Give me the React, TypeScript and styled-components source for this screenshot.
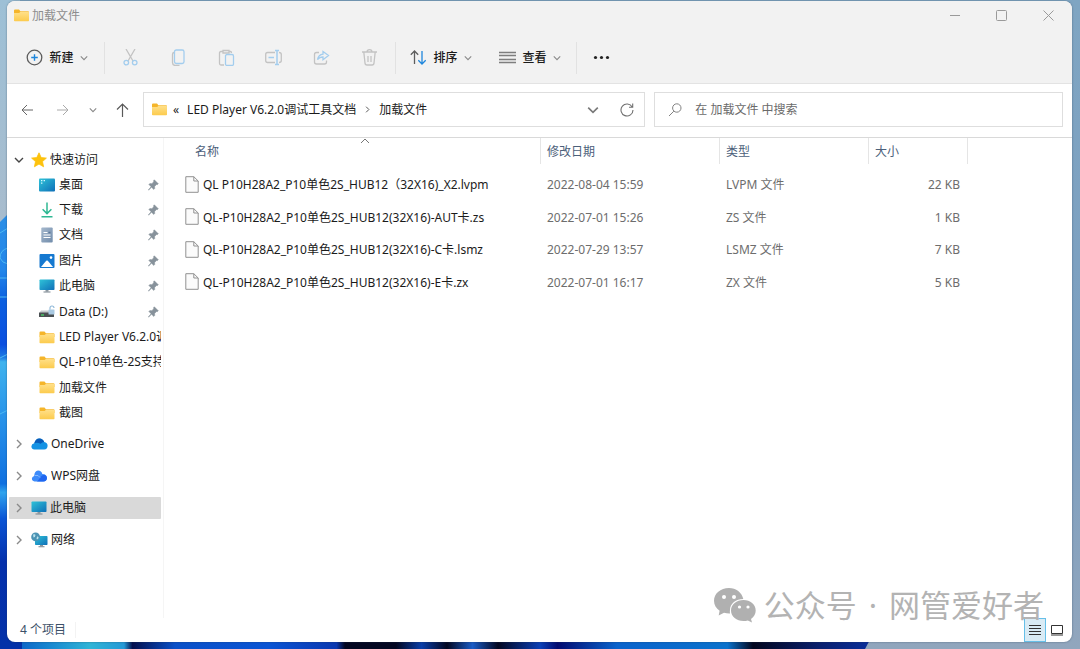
import React from 'react';
import styled, { createGlobalStyle } from 'styled-components';

const GlobalStyle = createGlobalStyle`
  * { box-sizing: border-box; }
  body {
    margin: 0;
    font-family: "Noto Sans", "Noto Sans CJK SC", sans-serif;
    font-size: 12px;
    line-height: 16px;
    color: #1b1b1b;
  }
  button, input { font: inherit; color: inherit; }
`;

const Desktop = styled.main`
  position: relative;
  min-height: 100vh;
  display: flex;
  padding: 1px 8px 7px 7px;
  background: #8fa6bf;
  overflow: hidden;
`;

const WallpaperArt = styled.svg`
  position: absolute;
  inset: 0;
  width: 100%;
  height: 100%;
`;

const Window = styled.section`
  position: relative;
  flex: 1;
  min-width: 0;
  display: flex;
  flex-direction: column;
  background: #fff;
  border-radius: 8px;
  overflow: hidden;
  box-shadow: 0 0 2px rgba(40, 60, 80, 0.6);
`;

const TitleBar = styled.header`
  display: flex;
  align-items: center;
  justify-content: space-between;
  height: 29px;
  padding-left: 7px;
  background: #f2f2f2;
`;

const Title = styled.h1`
  display: flex;
  align-items: center;
  gap: 3px;
  margin: 0;
  font-size: 12px;
  font-weight: 400;
  color: #8d8d8d;
`;

const Captions = styled.div`
  display: flex;
`;

const IconButton = styled.button<{ $w?: number; $h?: number }>`
  display: flex;
  align-items: center;
  justify-content: center;
  flex: none;
  width: ${p => p.$w ?? 24}px;
  height: ${p => p.$h ?? 24}px;
  padding: 0;
  border: 0;
  background: none;
`;

const Toolbar = styled.div`
  display: flex;
  align-items: center;
  height: 54px;
  padding: 2px 0 0 10px;
  border-bottom: 1px solid #e3e3e3;
  background: #f2f2f2;
`;

const ToolGroup = styled.div`
  display: grid;
  grid-template-columns: repeat(6, 1fr);
  justify-items: center;
  width: 286px;
`;

const SortGroup = styled.div`
  display: flex;
  gap: 9px;
`;

const ToolButton = styled.button`
  display: flex;
  align-items: center;
  justify-content: center;
  gap: 6px;
  height: 32px;
  width: 80px;
  padding: 0;
  border: 0;
  background: none;
  font-weight: 500;
`;

const Divider = styled.span<{ $left?: number; $right?: number }>`
  width: 1px;
  height: 32px;
  margin: 0 ${p => p.$right ?? 0}px 0 ${p => p.$left ?? 0}px;
  background: #e2e2e2;
`;

const NavBar = styled.div`
  display: flex;
  align-items: center;
  height: 54px;
  padding: 0 9px 2px 8px;
  border-bottom: 1px solid #d9d9d9;
`;

const NavButtons = styled.nav`
  display: flex;
  align-items: center;
  width: 128px;
`;

const AddressBar = styled.div`
  flex: 1;
  min-width: 0;
  display: flex;
  align-items: center;
  height: 35px;
  padding-left: 8px;
  border: 1px solid #dedede;
`;

const Crumbs = styled.div`
  flex: 1;
  min-width: 0;
  display: flex;
  align-items: center;
  gap: 8px;
  margin-left: 6px;
  white-space: nowrap;
`;

const Crumb = styled.a`
  color: inherit;
  text-decoration: none;
`;

const SearchBox = styled.label`
  width: 39%;
  flex: none;
  display: flex;
  align-items: center;
  gap: 12px;
  height: 35px;
  margin-left: 9px;
  padding: 0 13px;
  border: 1px solid #dedede;
`;

const SearchInput = styled.input`
  flex: 1;
  min-width: 0;
  padding: 0;
  border: 0;
  outline: 0;
  background: none;
  &::placeholder { color: #6a6a6a; opacity: 1; }
`;

const Content = styled.div`
  flex: 1;
  display: flex;
  min-height: 0;
`;

const Sidebar = styled.nav`
  width: 157px;
  flex: none;
  padding: 11px 2px 0;
  border-right: 1px solid #f5f5f5;
`;

const Tree = styled.ul`
  list-style: none;
  margin: 0;
  padding: 0;
`;

const QuickList = styled(Tree)`
  display: grid;
  grid-template-columns: minmax(0, 1fr);
  grid-template-rows: repeat(10, 1fr);
  height: 254px;
  margin: 1px 0 7px;
`;

const RootRow = styled.li<{ $selected?: boolean }>`
  display: flex;
  align-items: center;
  gap: 3px;
  height: 22px;
  padding-left: 5px;
  border-radius: 1px;
  background: ${p => (p.$selected ? '#d9d9d9' : 'none')};
  svg { flex: none; }
  svg:first-child { margin-right: 4px; }
  & + & { margin-top: 10px; }
`;

const QuickRow = styled.li`
  display: flex;
  align-items: center;
  gap: 4px;
  padding-left: 30px;
  svg { flex: none; }
`;

const TreeLink = styled.a`
  flex: 1;
  overflow: hidden;
  white-space: nowrap;
  color: inherit;
  text-decoration: none;
`;

const PinArt = styled.svg`
  margin-right: 2px;
`;

const FilePane = styled.div`
  flex: 1;
  min-width: 0;
`;

const Table = styled.table`
  width: 804px;
  height: 160px;
  table-layout: fixed;
  border-collapse: collapse;
`;

const Col = styled.col<{ $w: number }>`
  width: ${p => p.$w}px;
`;

const Th = styled.th`
  position: relative;
  height: 30px;
  padding: 0 0 2px 6px;
  text-align: left;
  font-weight: 400;
  color: #4c607a;
  background: linear-gradient(#e5e5e5, #e5e5e5) right top / 1px 26px no-repeat;
  &:first-child { padding-left: 31px; }
`;

const SortMark = styled.svg`
  position: absolute;
  top: 0;
  left: 196px;
`;

const Td = styled.td<{ $right?: boolean }>`
  height: 32px;
  padding: 2px 8px 0 6px;
  white-space: nowrap;
  color: #6d6d6d;
  text-align: ${p => (p.$right ? 'right' : 'left')};
`;

const FileName = styled.a`
  display: flex;
  align-items: center;
  gap: 4px;
  padding-left: 15px;
  color: #1b1b1b;
  text-decoration: none;
`;

const FileArt = styled.svg`
  margin-bottom: 2px;
`;

const StatusBar = styled.footer`
  display: flex;
  align-items: center;
  justify-content: space-between;
  height: 24px;
  padding: 0 4px 0 13px;
  color: #3c5068;
`;

const ItemCount = styled.span`
  padding-right: 9px;
  border-right: 1px solid #f3f3f3;
`;

const ViewSwitch = styled.div`
  display: flex;
`;

const ViewButton = styled(IconButton)<{ $on?: boolean }>`
  border: 1px solid ${p => (p.$on ? '#66bfe8' : 'transparent')};
  background: ${p => (p.$on ? '#d9ebf5' : 'none')};
`;

const Watermark = styled.div`
  position: absolute;
  right: 28px;
  bottom: 15px;
  display: flex;
  align-items: center;
  gap: 8px;
  font-size: 31px;
  line-height: 44px;
  color: #b3b3b3;
  white-space: nowrap;
  pointer-events: none;
`;

const WatermarkText = styled.div`
  display: flex;
  gap: 12px;
`;

const Chevron = ({ dir = 'down', size = 8, color = '#8a8a8a' }: { dir?: 'down' | 'right'; size?: number; color?: string }) => (
  <svg width={size} height={size} viewBox="0 0 10 10" fill="none" stroke={color} strokeWidth="1.4">
    <path d={dir === 'down' ? 'M1 3l4 4 4-4' : 'M3 1l4 4-4 4'} />
  </svg>
);

const Folder = ({ w = 15 }: { w?: number }) => (
  <svg width={w} height="13" viewBox="0 0 15 13">
    <path d="M0 1.6Q0 .6 1 .6h4l1.4 1.6H14q1 0 1 1V6H0z" fill="#f5b52a" />
    <path d="M0 4h5.2l1.3-1.2H14q1 0 1 1v7.6q0 .8-.8.8H.8q-.8 0-.8-.8z" fill="url(#folderFace)" />
  </svg>
);

const Monitor = () => (
  <svg width="16" height="14" viewBox="0 0 16 14">
    <rect x=".5" y=".5" width="15" height="10.5" rx=".8" fill="url(#screen)" />
    <path d="M6.5 11h3v1.6h-3z" fill="#8b969e" /><path d="M4.5 12.5h7v1h-7z" fill="#77838c" />
  </svg>
);

const Icons = {
  star: (
    <svg width="16" height="16" viewBox="0 0 16 16"><path d="M8 .8l2.2 4.8 5.2.5-3.9 3.5 1.1 5.2L8 12.1l-4.6 2.7 1.1-5.2L.6 6.1l5.2-.5z" fill="#fdc20d" stroke="#fdc20d" strokeWidth=".8" strokeLinejoin="round" /></svg>
  ),
  desktop: (
    <svg width="16" height="14" viewBox="0 0 16 14"><rect y=".5" width="16" height="13" rx="1" fill="url(#screen)" /><path d="M2 2.7h1.4M2 5.2h1.4M4.6 2.7H6" stroke="#d7f7ff" strokeWidth="1.2" /></svg>
  ),
  download: (
    <svg width="16" height="16" viewBox="0 0 16 16" fill="none" stroke="#2fb893" strokeWidth="1.5"><path d="M8 .5v11M3.6 7.3L8 11.6l4.4-4.3M2.5 14.8h11" /></svg>
  ),
  doc: (
    <svg width="16" height="16" viewBox="0 0 16 16"><rect x="2.3" y=".5" width="11.4" height="15" rx="1" fill="url(#docFace)" /><path d="M4.5 5.5h4M4.5 8h7M4.5 10.5h7" stroke="#fff" strokeWidth="1.2" /><path d="M9.5 5.5h2" stroke="#5e7898" strokeWidth="1.6" /></svg>
  ),
  picture: (
    <svg width="16" height="14" viewBox="0 0 16 14"><rect x=".5" width="15" height="14" rx="1" fill="#1679d0" /><path d="M2 13l5.2-6.2Q8 6 8.8 6.8L14 13z" fill="#fff" /><circle cx="12" cy="3.6" r="1.3" fill="#fff" /></svg>
  ),
  drive: (
    <svg width="16" height="14" viewBox="0 0 16 14"><path d="M2 5.5h9.5L15 8H0z" fill="#c4c9cc" /><rect y="7.5" width="15" height="4.5" rx=".6" fill="#4a4f52" /><path d="M2 10h3" stroke="#49e06a" strokeWidth="1.2" /><rect x="9.5" y="4.5" width="6" height="5" rx=".5" fill="#a9c9e2" /><path d="M11 4.5V3q0-2 2-2t2 2" fill="none" stroke="#8db7d8" strokeWidth="1.1" /></svg>
  ),
  onedrive: (
    <svg width="17" height="12" viewBox="0 0 17 12"><path d="M3.4 11.5Q.3 11.3.4 8.3.6 5.6 3.3 5.2 4.5.7 8.4.6q3.5 0 4.8 3.5 3.3.4 3.4 3.7-.1 3.5-3.4 3.7z" fill="#1593e4" /><path d="M3.3 5.2Q4.5.7 8.4.6q3.5 0 4.8 3.5-2 .1-3.6 1.6Q6.5 4.2 3.3 5.2z" fill="#0a5cb8" /></svg>
  ),
  wps: (
    <svg width="17" height="12" viewBox="0 0 17 12"><path d="M3.5 11.5Q.9 11.2.9 8.6q.1-2 2.3-2.6Q3.6.8 7 .6q3.6.1 4.3 3.5 4.3.3 4.7 3.7-.1 3.5-3.7 3.7z" fill="#3d8bfa" /><path d="M5.5 11.5q1.5-.5 3-3 2-3.500 5-3.700 2.500.8 2.500 3.200-.2 3.300-3.700 3.500z" fill="#1f66f0" /><path d="M4 5.500q3.500-1 5 2" fill="none" stroke="#9cc6ff" strokeWidth=".8" /></svg>
  ),
  network: (
    <svg width="17" height="16" viewBox="0 0 17 16"><rect x="4" y="4" width="12.500" height="9" rx=".7" fill="url(#screen)" /><path d="M9 13h3v1.300H9z" fill="#8b969e" /><path d="M7.500 14.300h6v1h-6z" fill="#77838c" /><circle cx="4.600" cy="4.900" r="4.400" fill="#4b93b4" /><path d="M2 2.500q2.600-1 2.400 1T2.500 5.500zM6 4.500q2-.4 1.500 1.500T5.500 7z" fill="#b9e2ec" /></svg>
  ),
};

const Pin = () => (
  <PinArt width="11" height="12" viewBox="0 0 11 12"><path d="M6.300.8l4 4-1 .9-.8-.2-1.900 2 .1 2-.9.900L3.500 8.200.6 11.200l-.3-.3L3.100 7.800.9 5.500l.9-.9 2.100.1L5.700 2.700l-.2-.9z" fill="#87929b" stroke="#87929b" strokeWidth=".5" /></PinArt>
);

const FileIcon = () => (
  <FileArt width="14" height="17" viewBox="0 0 14 17"><path d="M.8.700h8L13.200 5v11.300H.8z" fill="#fbfbfb" stroke="#929292" /><path d="M8.800.7V5h4.400" fill="none" stroke="#929292" /></FileArt>
);

const quick = [
  { icon: Icons.desktop, label: '桌面', pin: true },
  { icon: Icons.download, label: '下载', pin: true },
  { icon: Icons.doc, label: '文档', pin: true },
  { icon: Icons.picture, label: '图片', pin: true },
  { icon: <Monitor />, label: '此电脑', pin: true },
  { icon: Icons.drive, label: 'Data (D:)', pin: true },
  { icon: <Folder w={16} />, label: 'LED Player V6.2.0调试工具文档' },
  { icon: <Folder w={16} />, label: 'QL-P10单色-2S支持' },
  { icon: <Folder w={16} />, label: '加载文件' },
  { icon: <Folder w={16} />, label: '截图' },
];

const roots = [
  { icon: Icons.onedrive, label: 'OneDrive' },
  { icon: Icons.wps, label: 'WPS网盘' },
  { icon: <Monitor />, label: '此电脑', selected: true },
  { icon: Icons.network, label: '网络' },
];

const files = [
  ['QL P10H28A2_P10单色2S_HUB12（32X16)_X2.lvpm', '2022-08-04 15:59', 'LVPM 文件', '22 KB'],
  ['QL-P10H28A2_P10单色2S_HUB12(32X16)-AUT卡.zs', '2022-07-01 15:26', 'ZS 文件', '1 KB'],
  ['QL-P10H28A2_P10单色2S_HUB12(32X16)-C卡.lsmz', '2022-07-29 13:57', 'LSMZ 文件', '7 KB'],
  ['QL-P10H28A2_P10单色2S_HUB12(32X16)-E卡.zx', '2022-07-01 16:17', 'ZX 文件', '5 KB'],
];

const grey = '#c3c3c3';
const pale = '#a3cdee';

const tools = [
  { label: '剪切', art: <><path d="M4 0l7 12M13 0L6 12" stroke={grey} /><circle cx="4.300" cy="13.600" r="2.300" stroke={pale} /><circle cx="12.700" cy="13.600" r="2.300" stroke={pale} /></> },
  { label: '复制', art: <><path d="M4 3.500Q2.500 3.800 2.500 5.500v8q0 3 3 3h4" stroke={grey} /><rect x="4.500" y="1" width="9.500" height="13.500" rx="1.800" stroke={pale} /></> },
  { label: '粘贴', art: <><path d="M5 2.500H3q-1.500 0-1.500 1.500v10.500Q1.500 16 3 16h3M11 2.500h1.500Q13.500 2.500 13.500 4M5 1.500h6v2.500H5z" stroke={grey} /><rect x="7.500" y="5.500" width="8" height="11" rx="1.500" stroke={pale} /></> },
  { label: '重命名', art: <><path d="M10 3.500H2.500Q.7 3.500.7 5.500v6q0 2 2 2H10M14 3.500q2.300 0 2.300 2v6q0 2-2.300 2" stroke={grey} /><path d="M3.500 8.500H9M12 1.500v14M10 1.500h4M10 15.500h4" stroke={pale} strokeWidth="1.500" /></> },
  { label: '共享', art: <><path d="M6 3.500H3.500q-2 0-2 2V13q0 2 2 2h8q2 0 2-2v-1.500" stroke={grey} /><path d="M10 2.500v2.700q-4.500.4-5.500 5.500 2-2.700 5.500-2.700v2.800l5.500-4.200z" stroke={pale} /></> },
  { label: '删除', art: <path d="M1 3h15M6 3q0-2.300 2.500-2.300T11 3M2.800 3l1.200 11q.1 2 2 2h5q1.900 0 2-2l1.200-11M7 7v6M10 7v6" stroke={grey} /> },
];

const Glyph = ({ children, size = 17 }: { children: React.ReactNode; size?: number }) => (
  <svg width={size} height={size} viewBox="0 0 17 17" fill="none" strokeWidth="1.300">{children}</svg>
);

const Wallpaper = () => (
  <WallpaperArt viewBox="0 0 1080 649" preserveAspectRatio="none" aria-hidden="true">
    <defs>
      <linearGradient id="sky" x1="0" x2="0" y1="0" y2="1"><stop offset="0" stopColor="#7fa5c2" /><stop offset=".6" stopColor="#7c9fc0" /><stop offset="1" stopColor="#91a6bd" /></linearGradient>
      <linearGradient id="leftSky" x1="0" x2="0" y1="0" y2="1"><stop offset="0" stopColor="#9dc0d6" /><stop offset="1" stopColor="#a9bccd" /></linearGradient>
      <linearGradient id="leftBloom" x1="0" x2="0" y1="0" y2="1"><stop offset="0" stopColor="#2b8fe6" /><stop offset=".13" stopColor="#2286ea" /><stop offset=".2" stopColor="#0b5fe0" /><stop offset=".3" stopColor="#0a4fe0" /><stop offset=".33" stopColor="#1d7be4" /><stop offset=".34" stopColor="#3fb3ee" /><stop offset=".46" stopColor="#2a95ea" /><stop offset=".62" stopColor="#0f70e0" /><stop offset=".64" stopColor="#2fa4ee" /><stop offset=".7" stopColor="#0a55d6" /><stop offset=".8" stopColor="#0430ac" /><stop offset="1" stopColor="#0331a8" /></linearGradient>
      <linearGradient id="foot" x1="0" x2="1" y1="0" y2="0"><stop offset="0" stopColor="#0d68c8" /><stop offset=".03" stopColor="#1685d0" /><stop offset=".08" stopColor="#2fb4d6" /><stop offset=".12" stopColor="#2499d6" /><stop offset=".13" stopColor="#04104e" /><stop offset=".18" stopColor="#0a50c8" /><stop offset=".29" stopColor="#0b55d4" /><stop offset=".37" stopColor="#0a37b0" /><stop offset=".38" stopColor="#020620" /><stop offset=".44" stopColor="#020620" /><stop offset=".47" stopColor="#0a3ea8" /><stop offset=".5" stopColor="#020620" /><stop offset=".53" stopColor="#1a5cc6" /><stop offset=".56" stopColor="#020620" /><stop offset=".61" stopColor="#0b3fb6" /><stop offset=".63" stopColor="#020a70" /><stop offset=".7" stopColor="#0a63cc" /><stop offset=".83" stopColor="#0b72cc" /><stop offset=".86" stopColor="#02061e" /><stop offset=".94" stopColor="#0a2070" /><stop offset="1" stopColor="#0a2f9c" /></linearGradient>
      <linearGradient id="folderFace" x1="0" x2="0" y1="0" y2="1"><stop offset="0" stopColor="#ffe08a" /><stop offset="1" stopColor="#fccb4d" /></linearGradient>
      <linearGradient id="screen" x1="0" x2="1" y1="0" y2="1"><stop offset="0" stopColor="#2fc3d8" /><stop offset="1" stopColor="#0f6fb8" /></linearGradient>
      <linearGradient id="docFace" x1="0" x2="1" y1="0" y2="1"><stop offset="0" stopColor="#a5b8cd" /><stop offset="1" stopColor="#718cab" /></linearGradient>
    </defs>
    <path d="M0 0h1080v649H0z" fill="url(#sky)" />
    <path d="M0 0h20v240H0z" fill="url(#leftSky)" />
    <path d="M0 222l8-8h14v435H0z" fill="url(#leftBloom)" />
    <path d="M22 636h850l-7 13H22z" fill="url(#foot)" />
    <path d="M0 233l8-5M0 258q0-8 8-10M0 258q2 5 8 6M0 278h8M0 297h8M0 358l8-4M0 414l8-4" stroke="#4db8f2" fill="none" />
  </WallpaperArt>
);

export default function App() {
  return (
    <Desktop>
      <GlobalStyle />
      <Wallpaper />
      <Window>
        <TitleBar>
          <Title><Folder />加载文件</Title>
          <Captions>
            <IconButton $w={46} $h={28} aria-label="最小化"><svg width="10" height="10" stroke="#9a9a9a"><path d="M0 4.500h10" /></svg></IconButton>
            <IconButton $w={46} $h={28} aria-label="最大化"><svg width="11" height="11" fill="none" stroke="#9a9a9a"><rect x=".5" y=".5" width="10" height="10" rx="1" /></svg></IconButton>
            <IconButton $w={48} $h={28} aria-label="关闭"><svg width="11" height="11" stroke="#9a9a9a"><path d="M.5.5l10 10M10.500.5l-10 10" /></svg></IconButton>
          </Captions>
        </TitleBar>

        <Toolbar>
          <ToolButton>
            <Glyph><circle cx="8.500" cy="8.500" r="7.300" stroke="#5d5d5d" /><path d="M8.500 5.200v6.600M5.200 8.500h6.600" stroke="#1e86dc" strokeWidth="1.400" /></Glyph>
            新建<Chevron size={8} />
          </ToolButton>
          <Divider $left={7} $right={2} />
          <ToolGroup>
            {tools.map(t => (
              <IconButton key={t.label} $w={32} $h={32} aria-label={t.label}><Glyph>{t.art}</Glyph></IconButton>
            ))}
          </ToolGroup>
          <Divider $left={2} $right={5} />
          <SortGroup>
            <ToolButton>
              <Glyph><path d="M4.500 15V2M.8 5.700L4.500 2l3.700 3.700" stroke="#5d5d5d" /><path d="M12 2v13M8.300 11.300L12 15l3.700-3.700" stroke="#1e86dc" /></Glyph>
              排序<Chevron size={8} />
            </ToolButton>
            <ToolButton>
              <Glyph><path d="M0 3.500h17M0 6.500h17M0 10.500h17M0 13.500h17" stroke="#7e7e7e" /></Glyph>
              查看<Chevron size={8} />
            </ToolButton>
          </SortGroup>
          <Divider $left={6} />
          <IconButton $w={48} $h={32} aria-label="更多"><svg width="17" height="5" fill="#222"><circle cx="2.500" cy="2.500" r="1.600" /><circle cx="8.500" cy="2.500" r="1.600" /><circle cx="14.500" cy="2.500" r="1.600" /></svg></IconButton>
        </Toolbar>

        <NavBar>
          <NavButtons aria-label="导航">
            <IconButton $h={32} aria-label="后退"><svg width="12" height="12" fill="none" stroke="#666"><path d="M12 6H1M6 1L1 6l5 5" /></svg></IconButton>
            <IconButton $w={48} $h={32} aria-label="前进"><svg width="12" height="12" fill="none" stroke="#aaa"><path d="M0 6h11M6 1l5 5-5 5" /></svg></IconButton>
            <IconButton $w={12} $h={32} aria-label="最近"><Chevron size={8} /></IconButton>
            <IconButton $w={46} $h={32} aria-label="上移"><svg width="13" height="14" fill="none" stroke="#5a5a5a" strokeWidth="1.200"><path d="M6.500 14V1M1 6.500L6.500 1 12 6.500" /></svg></IconButton>
          </NavButtons>
          <AddressBar>
            <Folder />
            <Crumbs>
              <span>«</span>
              <Crumb href="#">LED Player V6.2.0调试工具文档</Crumb>
              <Chevron dir="right" size={7} color="#555" />
              <Crumb href="#">加载文件</Crumb>
            </Crumbs>
            <IconButton $w={34} aria-label="历史"><Chevron size={12} color="#7a7a7a" /></IconButton>
            <IconButton $w={34} aria-label="刷新"><svg width="14" height="14" viewBox="0 0 14 14" fill="none" stroke="#707070" strokeWidth="1.100"><path d="M12.200 4A6 6 0 1 0 13 7M12.700.6v3.600H9" /></svg></IconButton>
          </AddressBar>
          <SearchBox>
            <svg width="15" height="14" viewBox="0 0 15 14" fill="none" stroke="#808080"><circle cx="8.800" cy="5" r="4.200" /><path d="M5.800 8.200L1 13" /></svg>
            <SearchInput aria-label="搜索" placeholder="在 加载文件 中搜索" />
          </SearchBox>
        </NavBar>

        <Content>
          <Sidebar aria-label="导航窗格">
            <Tree>
              <RootRow>
                <Chevron size={10} color="#444" />
                {Icons.star}
                <TreeLink href="#">快速访问</TreeLink>
              </RootRow>
            </Tree>
            <QuickList>
              {quick.map((q, i) => (
                <QuickRow key={i}>
                  {q.icon}
                  <TreeLink href="#">{q.label}</TreeLink>
                  {q.pin && <Pin />}
                </QuickRow>
              ))}
            </QuickList>
            <Tree>
              {roots.map(r => (
                <RootRow key={r.label} $selected={r.selected}>
                  <Chevron dir="right" size={10} />
                  {r.icon}
                  <TreeLink href="#">{r.label}</TreeLink>
                </RootRow>
              ))}
            </Tree>
          </Sidebar>

          <FilePane>
            <Table>
              <colgroup><Col $w={377} /><Col $w={179} /><Col $w={149} /><Col $w={99} /></colgroup>
              <thead>
                <tr>
                  <Th>名称<SortMark width="10" height="6" fill="none" stroke="#777"><path d="M1 5l4-4 4 4" /></SortMark></Th>
                  <Th>修改日期</Th>
                  <Th>类型</Th>
                  <Th>大小</Th>
                </tr>
              </thead>
              <tbody>
                {files.map(([name, date, type, size]) => (
                  <tr key={name}>
                    <Td><FileName href="#"><FileIcon />{name}</FileName></Td>
                    <Td>{date}</Td>
                    <Td>{type}</Td>
                    <Td $right>{size}</Td>
                  </tr>
                ))}
              </tbody>
            </Table>
          </FilePane>
        </Content>

        <StatusBar>
          <ItemCount>4 个项目</ItemCount>
          <ViewSwitch>
            <ViewButton $w={22} $on aria-label="详细信息"><svg width="12" height="12" stroke="#333"><path d="M0 1.500h12M0 4.500h12M0 7.500h12M0 10.500h12" /></svg></ViewButton>
            <ViewButton $w={22} aria-label="大图标"><svg width="12" height="12" fill="none" stroke="#333"><path d="M.5 1.500h11v8H.5zM0 11h12" /></svg></ViewButton>
          </ViewSwitch>
        </StatusBar>

        <Watermark>
          <svg width="42" height="35" viewBox="0 0 42 35" fill="#b0b0b0">
            <path d="M15 0C6.500 0 0 5.600 0 12.800c0 4.200 2.200 7.700 5.600 10L4.700 27.500l5.300-2.800c2 .6 4 .9 6 .8A11 11 0 0 1 16 22c0-6.500 6-11 13.300-11C28 4.600 22 0 15 0z" />
            <path d="M29.500 12C22.600 12 17 16.500 17 22.500S22.600 33 29.500 33c1.600 0 3-.2 4.300-.6L38 34.600l-1-3.700c3-2 4.700-5 4.700-8.400C41.700 16.500 36.300 12 29.500 12z" />
            <g fill="#fff"><circle cx="10" cy="9" r="2" /><circle cx="20" cy="9" r="2" /><circle cx="25.500" cy="19" r="1.600" /><circle cx="34" cy="19" r="1.600" /></g>
          </svg>
          <WatermarkText><span>公众号</span><span>·</span><span>网管爱好者</span></WatermarkText>
        </Watermark>
      </Window>
    </Desktop>
  );
}
